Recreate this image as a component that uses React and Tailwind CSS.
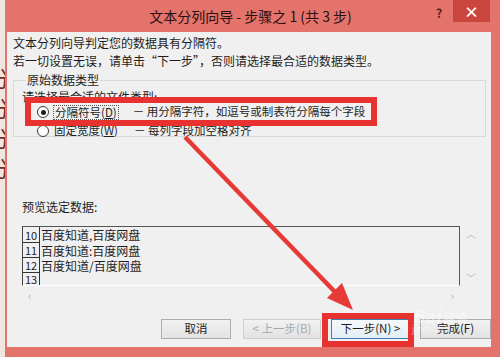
import React from 'react';

const font = "font-['Noto_Sans_CJK_SC',sans-serif]";

function Radio({ checked }) {
  return (
    <span className="flex h-[12px] w-[12px] shrink-0 items-center justify-center rounded-full border border-[#3a3a3a] bg-white">
      {checked ? <span className="h-[5px] w-[5px] rounded-full bg-[#1e1e1e]" /> : null}
    </span>
  );
}

function Btn({ children, className = '' }) {
  return (
    <div
      className={`flex h-[20px] items-center justify-center border bg-gradient-to-b from-[#f2f2f2] to-[#e2e2e2] text-[11.5px] leading-none ${className}`}
    >
      {children}
    </div>
  );
}

const rows = [
  { n: '10', text: '百度知道,百度网盘', h: 'h-[16px]' },
  { n: '11', text: '百度知道:百度网盘', h: 'h-[15px]' },
  { n: '12', text: '百度知道/百度网盘', h: 'h-[15px]' },
  { n: '13', text: '', h: 'h-[14px]' },
];

export default function App() {
  return (
    <div className={`relative flex h-[357px] w-[500px] overflow-hidden bg-[#e3736b] text-[#1e1e1e] ${font}`}>
      {/* page behind the dialog */}
      <div className="flex w-[8px] flex-col overflow-hidden bg-[#efe6e1] pt-[62px]">
        {['分', '分', '分', '分'].map((c, i) => (
          <span key={i} className="-ml-[12px] text-[22px] leading-[30px] text-[#7a2a28]">
            {c}
          </span>
        ))}
      </div>

      {/* dialog window */}
      <div className="flex flex-1 flex-col">
        <div className="flex h-[32px] items-start">
          <div className="flex h-[32px] flex-1 items-center justify-center pl-[66px] text-[14px] leading-none text-[#2a1010]">
            文本分列向导 - 步骤之 1 (共 3 步)
          </div>
          <div className="mt-[5px] w-[18px] text-center text-[12px] font-bold leading-[16px] text-[#5a1c1a]">?</div>
          <div className="ml-[5px] mr-[10px] flex h-[22px] w-[37px] items-center justify-center bg-[#c9463f] text-[15px] font-bold leading-none text-white">
            ×
          </div>
        </div>

        <div className="mb-[10px] ml-[2px] mr-[9px] flex flex-1 flex-col bg-[#f0f0f0] pl-[6px] pt-[2px] text-[12px]">
          <div className="leading-[18px]">文本分列向导判定您的数据具有分隔符。</div>
          <div className="leading-[18px]">若一切设置无误，请单击“下一步”，否则请选择最合适的数据类型。</div>

          <fieldset className="mr-[5px] mt-[3px] h-[64px] border border-[#d9d9d9] pl-[8px]">
            <legend className="ml-[4px] px-[1px] leading-[14px]">原始数据类型</legend>
            <div className="mt-[2px] h-[15px] leading-[15px]">请选择最合适的文件类型:</div>
            <div className="flex h-[16px] items-center pl-[15px] text-[11.5px]">
              <Radio checked />
              <span className="ml-[4px] border border-dotted border-[#555] px-[1px] leading-[13px]">
                分隔符号(<u>D</u>)
              </span>
              <span className="ml-[14px]">－ 用分隔字符，如逗号或制表符分隔每个字段</span>
            </div>
            <div className="mt-[2px] flex h-[18px] items-center pl-[15px] text-[11.5px]">
              <Radio />
              <span className="ml-[5px]">固定宽度(<u>W</u>)</span>
              <span className="ml-[16px]">－ 每列字段加空格对齐</span>
            </div>
          </fieldset>

          <div className="ml-[9px] mt-[62px] leading-[16px]">预览选定数据:</div>

          <div className="ml-[9px] mt-[11px] flex h-[78px] w-[460px]">
            <div className="flex w-[438px] flex-col">
              <div className="flex h-[60px] flex-col overflow-hidden border-b border-l border-r border-t border-b-white border-l-[#444] border-r-[#555] border-t-[#555] bg-[#f0f0f0]">
                {rows.map((r) => (
                  <div key={r.n} className={`flex ${r.h} shrink-0`}>
                    <div className="flex w-[17px] shrink-0 items-end justify-center border-b border-r border-[#333] text-[11px] leading-[13px]">
                      {r.n}
                    </div>
                    <div className="pl-[1px] text-[12px] leading-[15px]">{r.text}</div>
                  </div>
                ))}
              </div>
              <div className="flex h-[18px] items-center justify-between px-[6px] text-[11px] text-[#b0b0b0]">
                <span>‹</span>
                <span>›</span>
              </div>
            </div>
            <div className="flex h-[60px] w-[22px] flex-col items-center justify-between py-[2px] text-[10px] leading-[12px] text-[#b0b0b0]">
              <span>︿</span>
              <span>﹀</span>
            </div>
          </div>

          <div className="mt-[15px] flex pl-[148px]">
            <Btn className="w-[70px] border-[#acacac]">取消</Btn>
            <Btn className="ml-[12px] w-[78px] border-[#cfcfcf] text-[#a8a8a8]">&lt; 上一步(B)</Btn>
            <Btn className="ml-[10px] w-[79px] border-[#3c7fb1] from-[#f4f8fb] to-[#e4eef6]">下一步(N) &gt;</Btn>
            <Btn className="ml-[10px] w-[71px] border-[#acacac]">完成(F)</Btn>
          </div>
        </div>
      </div>

      {/* annotations drawn over the screenshot */}
      <div className="pointer-events-none absolute left-[25px] top-[97px] h-[29px] w-[352px] border-[6px] border-[#e8322f]" />
      <div className="pointer-events-none absolute left-[322px] top-[313px] h-[34px] w-[92px] border-[6px] border-[#e8322f]" />
      <svg className="pointer-events-none absolute left-0 top-0" width="500" height="357">
        <line x1="185" y1="137" x2="337" y2="294" stroke="#e53a35" strokeWidth="4.5" />
        <polygon points="353,310 327,298 342,283" fill="#e53a35" />
      </svg>
      <div className="pointer-events-none absolute left-[412px] top-[306px] flex flex-col items-start leading-none text-white/45">
        <span className="text-[18px] font-bold italic">Bai<span className="ml-[3px] text-[12px] not-italic">经验</span></span>
        <span className="text-[9px]">jingyan</span>
      </div>
    </div>
  );
}
